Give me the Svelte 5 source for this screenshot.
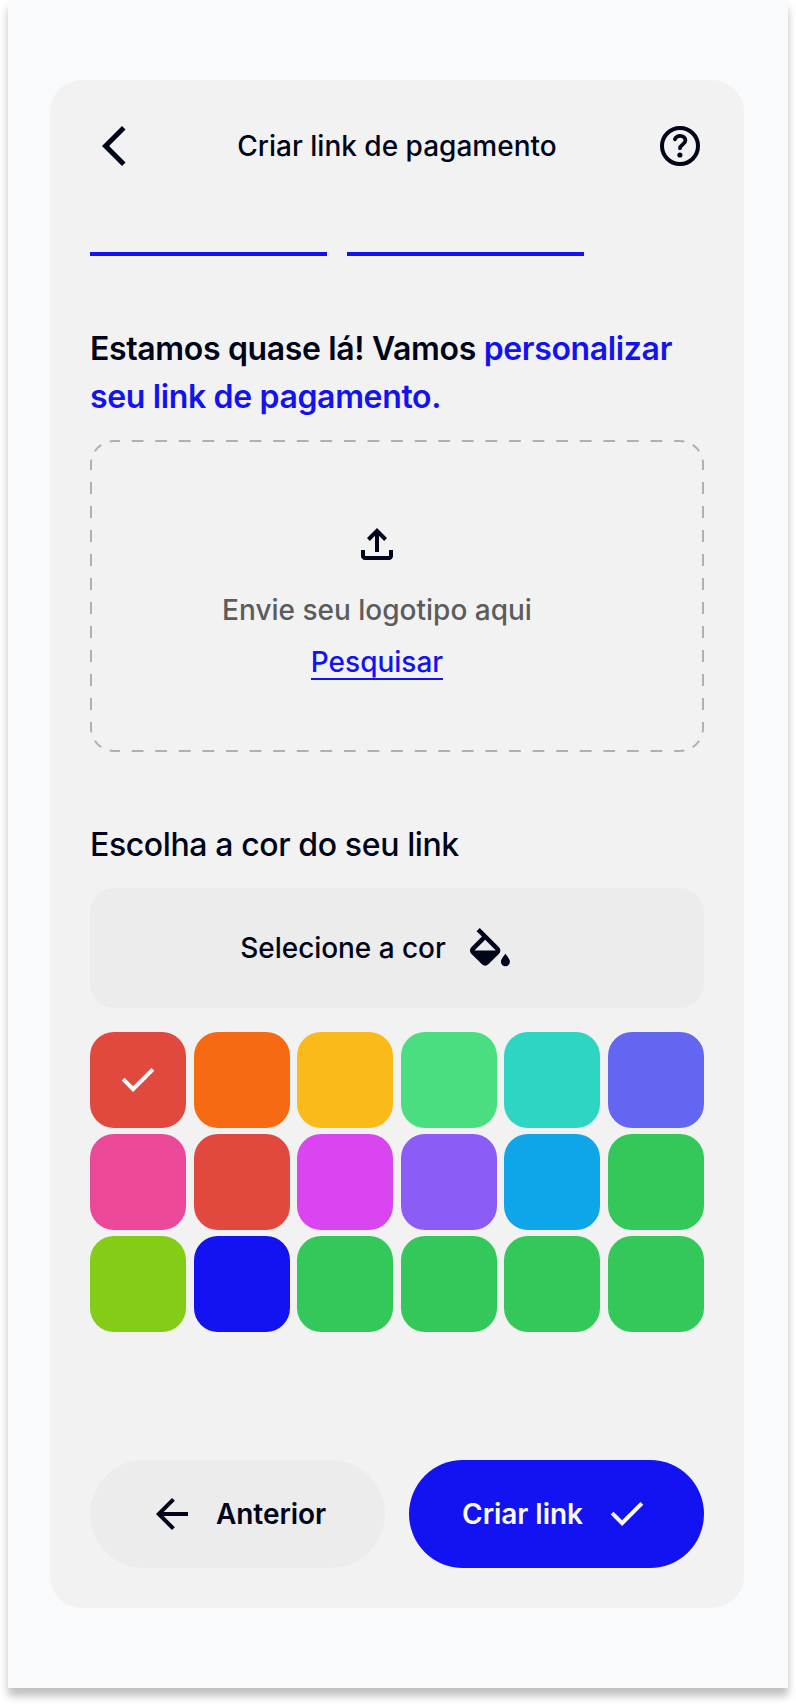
<script>
  const colors = [
    '#e2493e', '#f56a13', '#f9ba1a', '#4ade80', '#2dd5c2', '#6366f1',
    '#ec4899', '#e2493e', '#d946ef', '#8b5cf6', '#0ea5e9', '#34c85a',
    '#84cc16', '#1212f2', '#34c85a', '#34c85a', '#34c85a', '#34c85a'
  ];
  let selected = $state(0);
</script>

<div class="page">
  <main class="card">
    <header>
      <button class="icon-btn" aria-label="Voltar">
        <svg class="icon" viewBox="0 0 24 24"><path d="M16 22 6 12 16 2l1.775 1.775L9.55 12l8.225 8.225Z" /></svg>
      </button>
      <h1>Criar link de pagamento</h1>
      <button class="icon-btn" aria-label="Ajuda">
        <svg class="icon" viewBox="0 0 24 24">
          <circle cx="12" cy="12" r="9" fill="none" stroke="currentColor" stroke-width="2" />
          <path d="M9.45 8.6C9.9 7.5 10.8 6.9 12.05 6.9c1.55 0 2.65.95 2.65 2.3 0 1.9-2.7 2.1-2.7 3.9" fill="none" stroke="currentColor" stroke-width="1.9" stroke-linecap="round" />
          <circle cx="11.95" cy="16.5" r="1.28" />
        </svg>
      </button>
    </header>

    <div class="steps"><span></span><span></span></div>

    <h2>Estamos quase lá! Vamos <em>personalizar</em><br /><em>seu link de pagamento.</em></h2>

    <section class="dropzone">
      <svg class="outline" viewBox="0 0 614 312" fill="none" stroke="#b0b0b0" stroke-width="2" stroke-dasharray=".5 .5" stroke-dashoffset=".25">
        <path pathLength="24" d="M24 1H590" />
        <path pathLength="24" d="M24 311H590" />
        <path pathLength="11" d="M1 24V288" />
        <path pathLength="11" d="M613 24V288" />
        <path pathLength="2" d="M1 24A23 23 0 0 1 24 1" />
        <path pathLength="2" d="M590 1A23 23 0 0 1 613 24" />
        <path pathLength="2" d="M613 288A23 23 0 0 1 590 311" />
        <path pathLength="2" d="M24 311A23 23 0 0 1 1 288" />
      </svg>
      <svg class="icon" viewBox="0 0 24 24"><path d="M11 16V7.85l-2.6 2.6L7 9l5-5 5 5-1.4 1.45-2.6-2.6V16h-2Zm-5 4q-.825 0-1.412-.587Q4 18.825 4 18v-3h2v3h12v-3h2v3q0 .825-.587 1.413Q18.825 20 18 20H6Z" /></svg>
      <p>Envie seu logotipo aqui</p>
      <a href="#pesquisar">Pesquisar</a>
    </section>

    <h3>Escolha a cor do seu link</h3>

    <button class="picker">
      <span>Selecione a cor</span>
      <svg class="icon" viewBox="0 0 24 24">
        <path transform="translate(-1.66 28.98) scale(.0281)" d="m247-904 57-56 343 343q23 23 23 57t-23 57L457-313q-23 23-57 23t-57-23L153-503q-23-23-23-57t23-57l190-191-96-96Zm153 153L209-560h382L400-751Zm360 471q-33 0-56.5-23.5T680-360q0-21 12.5-45t27.5-45q9-12 19-25t21-25q11 12 21 25t19 25q15 21 27.5 45t12.5 45q0 33-23.5 56.5T760-280Z" />
      </svg>
    </button>

    <div class="swatches">
      {#each colors as color, i}
        <button class="swatch" style="background:{color}" aria-label={color} onclick={() => (selected = i)}>
          {#if selected === i}
            <svg class="icon" viewBox="0 0 24 24"><path d="m9.55 18-5.7-5.7 1.425-1.425L9.55 15.15l9.175-9.175L20.15 7.4Z" /></svg>
          {/if}
        </button>
      {/each}
    </div>

    <footer>
      <button class="action">
        <svg class="icon" viewBox="0 0 24 24"><path d="m12 20-8-8 8-8 1.425 1.4-5.6 5.6H20v2H7.825l5.6 5.6Z" /></svg>
        <span>Anterior</span>
      </button>
      <button class="action primary">
        <span>Criar link</span>
        <svg class="icon" viewBox="0 0 24 24"><path d="m9.55 18-5.7-5.7 1.425-1.425L9.55 15.15l9.175-9.175L20.15 7.4Z" /></svg>
      </button>
    </footer>
  </main>
</div>

<style>
  :global(body) { background: #fff; overflow: hidden; }
  * { box-sizing: border-box; }
  .page {
    width: 780px;
    height: 1688px;
    margin: 0 8px 16px;
    padding: 80px 44px 80px 42px;
    background: #f9fafc;
    box-shadow: 0 8px 8px rgba(0, 0, 0, .25);
    font-family: Inter, sans-serif;
    font-size: 28px;
    font-weight: 500;
    line-height: 40px;
    color: #00051a;
  }
  .card {
    display: flex;
    flex-direction: column;
    height: 1528px;
    padding: 40px;
    border-radius: 32px;
    background: #f2f2f2;
  }
  button {
    padding: 0;
    border: 0;
    background: none;
    font: inherit;
    color: inherit;
  }
  h1, h2, h3, p { margin: 0; font-weight: 500; }
  .icon { display: block; width: 48px; height: 48px; flex: none; fill: currentColor; }
  header { display: flex; align-items: center; justify-content: space-between; height: 52px; }
  h1 { font-size: 28px; }
  .steps { display: flex; gap: 20px; margin-top: 80px; }
  .steps span { width: 237px; height: 4px; background: #1212f2; }
  h2 { margin-top: 69px; font-size: 32px; font-weight: 600; line-height: 48px; letter-spacing: -.011em; white-space: nowrap; }
  h2 em { font-style: normal; color: #1212f2; }
  .dropzone {
    position: relative;
    display: flex;
    flex-direction: column;
    align-items: center;
    height: 312px;
    margin-top: 19px;
    padding: 80px 40px 0 0;
  }
  .outline { position: absolute; inset: 0; width: 614px; height: 312px; }
  .dropzone p { margin-top: 22px; color: #5c5c5c; }
  .dropzone a {
    height: 38px;
    margin-top: 12px;
    color: #1212f2;
    text-decoration: none;
    border-bottom: 2px solid #1212f2;
  }
  h3 { margin-top: 69px; font-size: 32px; line-height: 48px; letter-spacing: -.012em; }
  .picker {
    display: flex;
    align-items: center;
    justify-content: center;
    gap: 20px;
    height: 120px;
    margin-top: 19px;
    padding-right: 40px;
    border-radius: 24px;
    background: #ececec;
    letter-spacing: -.002em;
  }
  .swatches {
    display: grid;
    grid-template-columns: repeat(6, 96px);
    justify-content: space-between;
    row-gap: 6px;
    margin-top: 24px;
  }
  .swatch {
    display: grid;
    place-items: center;
    height: 96px;
    border-radius: 24px;
    color: #fff;
  }
  footer { display: grid; grid-template-columns: 1fr 1fr; gap: 24px; margin-top: auto; }
  .action {
    display: flex;
    align-items: center;
    justify-content: center;
    gap: 20px;
    height: 108px;
    border-radius: 54px;
    background: #ececec;
    font-weight: 600;
    letter-spacing: -.002em;
  }
  .action:first-child { padding-right: 1px; }
  .primary { background: #1212f2; color: #f9fafc; }
</style>
